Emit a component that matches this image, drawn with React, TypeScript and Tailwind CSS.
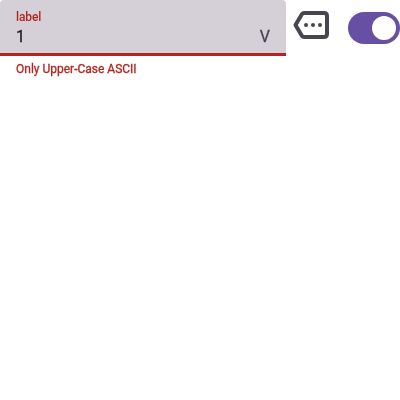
export default function App() {
  return (
    <div className="flex h-[400px] w-[400px] items-start overflow-hidden bg-white font-['Roboto',sans-serif]">
      <div className="w-[286px]">
        <div className="flex h-[56px] items-end justify-between rounded-t-[4px] border-b-[3px] border-[#b3261e] bg-[#d5cfd8] px-4 pb-[4px] will-change-transform">
          <div>
            <div className="text-[12px] font-medium leading-[16px] tracking-[-0.1px] text-[#b3261e]">label</div>
            <div className="text-[16px] leading-[24px] text-[#1c1b1f] [-webkit-text-stroke:0.3px_#1c1b1f]">1</div>
          </div>
          <div className="text-[16px] leading-[24px] text-[#49454f] [-webkit-text-stroke:0.3px_#49454f]">V</div>
        </div>
        <div className="px-4 pt-[5px] text-[12px] leading-[16px] text-[#b3261e] will-change-transform [-webkit-text-stroke:0.3px_#b3261e]">Only Upper-Case ASCII</div>
      </div>
      <svg className="mt-[5px] ml-[5px] h-[40px] w-[40px]" viewBox="0 0 40 40" fill="#49454f">
        <path d="M13 8H33Q36 8 36 11V29Q36 32 33 32H13Q11.8 32 11 31L4.5 20L11 9Q11.8 8 13 8Z" fill="none" stroke="#49454f" strokeWidth="4" strokeLinejoin="round" />
        <circle cx="15" cy="20" r="2" />
        <circle cx="22" cy="20" r="2" />
        <circle cx="29" cy="20" r="2" />
      </svg>
      <button className="mt-[12px] ml-auto flex h-[32px] w-[52px] items-center justify-end rounded-full bg-[#6750a4] pr-[4px]" aria-label="Enabled">
        <span className="h-[24px] w-[24px] rounded-full bg-white" />
      </button>
    </div>
  );
}
